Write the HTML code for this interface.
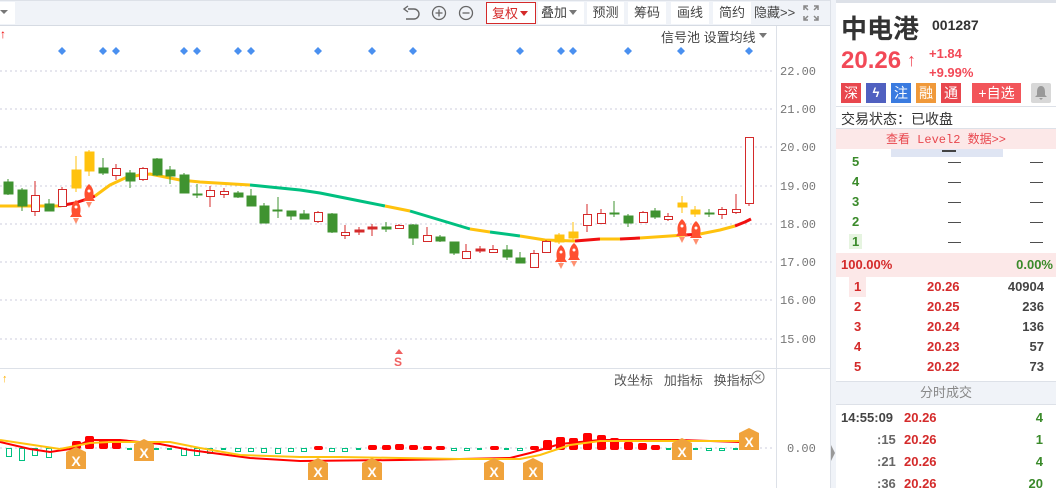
<!DOCTYPE html>
<html><head><meta charset="utf-8"><style>
*{margin:0;padding:0;box-sizing:border-box}
body{width:1056px;height:488px;overflow:hidden;background:#fff;font-family:"Liberation Sans","Noto Sans CJK SC",sans-serif;position:relative}
.a{position:absolute;white-space:nowrap}
.tb{position:absolute;top:0;left:0;width:830px;height:26px;background:#f0f3f8;border-top:1px solid #dde1e8;border-bottom:1px solid #d6dbe3}
.btn{position:absolute;top:2px;height:22px;background:#fff;font-size:13px;color:#444;line-height:22px;text-align:center;white-space:nowrap}
.m{font-family:"Liberation Mono",monospace}
.r{color:#d42a2a}.g{color:#3a8a2a}
</style></head><body>
<div class="tb"></div>
<div class="a" style="left:0;top:2px;width:15px;height:22px;background:#fff"></div>
<div class="a" style="left:0;top:10px;width:0;height:0;border-left:4px solid transparent;border-right:4px solid transparent;border-top:4px solid #777"></div>
<svg class="a" style="left:400px;top:4px" width="75" height="18" viewBox="0 0 75 18">
<path d="M8 5 h6 a5 5 0 0 1 0 10 h-8" fill="none" stroke="#666" stroke-width="1.4"/><path d="M8 2 L4 5 L8 8" fill="none" stroke="#666" stroke-width="1.4"/>
<circle cx="39" cy="9" r="6.5" fill="none" stroke="#666" stroke-width="1.3"/><path d="M35.5 9h7M39 5.5v7" stroke="#666" stroke-width="1.3"/>
<circle cx="66" cy="9" r="6.5" fill="none" stroke="#666" stroke-width="1.3"/><path d="M62.5 9h7" stroke="#666" stroke-width="1.3"/>
</svg>
<div class="btn" style="left:486px;width:50px;border:1px solid #d42a2a;color:#d42a2a;text-align:left;padding-left:5px">复权<span style="position:absolute;left:33px;top:8px;border-left:4px solid transparent;border-right:4px solid transparent;border-top:5px solid #d42a2a"></span></div>
<div class="btn" style="left:538px;width:46px;text-align:left;padding-left:3px">叠加<span style="position:absolute;left:31px;top:8px;border-left:4px solid transparent;border-right:4px solid transparent;border-top:5px solid #777"></span></div>
<div class="btn" style="left:587px;width:37px">预测</div>
<div class="btn" style="left:628px;width:38px">筹码</div>
<div class="btn" style="left:671px;width:38px">画线</div>
<div class="btn" style="left:713px;width:38px">简约</div>
<div class="btn" style="left:754px;width:42px;background:none;text-align:left">隐藏&gt;&gt;</div>
<svg class="a" style="left:803px;top:5px" width="16" height="16" viewBox="0 0 16 16" fill="none" stroke="#888" stroke-width="1.5"><path d="M1 5V1h4M11 1h4v4M15 11v4h-4M5 15H1v-4M1 1l4 4M15 1l-4 4M15 15l-4-4M1 15l4-4"/></svg>

<div class="a" style="left:661px;top:27px;font-size:13px;color:#444">信号池&nbsp;设置均线</div>
<div class="a" style="left:759px;top:33px;border-left:4px solid transparent;border-right:4px solid transparent;border-top:5px solid #777"></div>
<div class="a" style="left:0;top:27px;font-size:12px;color:#e00">↑</div>

<svg class="a" style="left:0;top:0" width="836" height="488">
<g stroke="#ccd" stroke-dasharray="2,3" stroke-width="1">
<path d="M0 71H775M0 109H775M0 147H775M0 186H775M0 224H775M0 262H775M0 300H775M0 339H775M0 448H775"/>
</g>
<line x1="776.5" y1="26" x2="776.5" y2="488" stroke="#dde1e8"/>
<line x1="0" y1="368.5" x2="830" y2="368.5" stroke="#dde1e8"/>
<line x1="830.5" y1="0" x2="830.5" y2="488" stroke="#dde1e8"/>
<rect x="831" y="0" width="5" height="488" fill="#f0f3f8"/>
<path d="M831 445 l4 8 l-4 8z" fill="#999"/>
<g font-family="Liberation Mono,monospace" font-size="12" fill="#777">
<text x="780" y="75">22.00</text><text x="780" y="113">21.00</text><text x="780" y="151">20.00</text><text x="780" y="190">19.00</text><text x="780" y="228">18.00</text><text x="780" y="266">17.00</text><text x="780" y="304">16.00</text><text x="780" y="343">15.00</text><text x="787" y="452">0.00</text>
</g>
<g fill="#4a90f0">
<path d="M62 47l4 4-4 4-4-4zM103 47l4 4-4 4-4-4zM116 47l4 4-4 4-4-4zM184 47l4 4-4 4-4-4zM197 47l4 4-4 4-4-4zM238 47l4 4-4 4-4-4zM251 47l4 4-4 4-4-4zM318 47l4 4-4 4-4-4zM372 47l4 4-4 4-4-4zM413 47l4 4-4 4-4-4zM520 47l4 4-4 4-4-4zM561 47l4 4-4 4-4-4zM573 47l4 4-4 4-4-4zM628 47l4 4-4 4-4-4zM681 47l4 4-4 4-4-4zM749 47l4 4-4 4-4-4z"/>
</g>
<g fill="none" stroke-width="3" stroke-linejoin="round">
<polyline stroke="#ffc20e" points="0,206 60,206 64,205"/>
<polyline stroke="#f01010" points="64,205 75,203 90,198 95,196"/>
<polyline stroke="#ffc20e" points="95,196 110,185 125,178 140,175 150,174 160,176 180,180 200,182 250,185"/>
<polyline stroke="#00c080" points="250,185 270,187 300,190 320,193 340,197 360,201 385,206"/>
<polyline stroke="#ffc20e" points="385,206 410,211"/>
<polyline stroke="#00c080" points="410,211 440,220 470,229"/>
<polyline stroke="#ffc20e" points="470,229 490,232"/>
<polyline stroke="#00c080" points="490,232 520,236"/>
<polyline stroke="#ffc20e" points="520,236 545,240 575,241"/>
<polyline stroke="#f01010" points="575,241 600,239"/>
<polyline stroke="#ffc20e" points="600,239 620,239"/>
<polyline stroke="#f01010" points="620,239 640,238"/>
<polyline stroke="#ffc20e" points="640,238 670,236 685,235"/>
<polyline stroke="#f01010" points="685,235 700,234"/>
<polyline stroke="#ffc20e" points="700,234 720,230 735,226"/>
<polyline stroke="#f01010" points="735,226 745,222 751,219"/>
</g>
<g stroke-width="1">
<g stroke="#3f9330" fill="#3f9330">
<line x1="8" y1="179" x2="8" y2="195"/><rect x="4" y="182" width="9" height="12"/>
<line x1="22" y1="188" x2="22" y2="211"/><rect x="18" y="190" width="9" height="16"/>
<line x1="49" y1="199" x2="49" y2="211"/><rect x="45" y="204" width="9" height="7"/>
<line x1="103" y1="158" x2="103" y2="175"/><rect x="99" y="168" width="9" height="5"/>
<line x1="130" y1="170" x2="130" y2="188"/><rect x="126" y="173" width="9" height="8"/>
<line x1="157" y1="158" x2="157" y2="176"/><rect x="153" y="159" width="9" height="16"/>
<line x1="170" y1="166" x2="170" y2="184"/><rect x="166" y="170" width="9" height="6"/>
<line x1="184" y1="173" x2="184" y2="193"/><rect x="180" y="175" width="9" height="18"/>
<line x1="197" y1="184" x2="197" y2="198"/><rect x="193" y="194" width="9" height="1"/>
<line x1="238" y1="191" x2="238" y2="198"/><rect x="234" y="193" width="9" height="4"/>
<line x1="251" y1="189" x2="251" y2="206"/><rect x="247" y="196" width="9" height="10"/>
<line x1="264" y1="203" x2="264" y2="223"/><rect x="260" y="206" width="9" height="17"/>
<line x1="278" y1="197" x2="278" y2="218"/><rect x="273" y="210" width="9" height="1"/>
<line x1="291" y1="211" x2="291" y2="220"/><rect x="287" y="211" width="9" height="5"/>
<line x1="304" y1="210" x2="304" y2="219"/><rect x="300" y="214" width="9" height="5"/>
<line x1="332" y1="213" x2="332" y2="233"/><rect x="328" y="214" width="9" height="18"/>
<line x1="386" y1="222" x2="386" y2="232"/><rect x="382" y="227" width="9" height="2"/>
<line x1="413" y1="224" x2="413" y2="245"/><rect x="409" y="225" width="9" height="13"/>
<line x1="440" y1="235" x2="440" y2="242"/><rect x="436" y="237" width="9" height="4"/>
<line x1="454" y1="242" x2="454" y2="255"/><rect x="450" y="242" width="9" height="11"/>
<line x1="507" y1="245" x2="507" y2="260"/><rect x="503" y="250" width="9" height="7"/>
<line x1="520" y1="252" x2="520" y2="263"/><rect x="516" y="258" width="9" height="5"/>
<line x1="614" y1="201" x2="614" y2="217"/><rect x="610" y="213" width="9" height="1"/>
<line x1="628" y1="214" x2="628" y2="227"/><rect x="624" y="216" width="9" height="7"/>
<line x1="655" y1="208" x2="655" y2="219"/><rect x="651" y="211" width="9" height="6"/>
<line x1="709" y1="209" x2="709" y2="217"/><rect x="705" y="213" width="9" height="1"/>
</g>
<g stroke="#d42a2a" fill="#fff">
<line x1="35" y1="181" x2="35" y2="216"/><rect x="31.5" y="195.5" width="8" height="16"/>
<line x1="62" y1="187" x2="62" y2="207"/><rect x="58.5" y="189.5" width="8" height="17"/>
<line x1="116" y1="164" x2="116" y2="180"/><rect x="112.5" y="168.5" width="8" height="7"/>
<line x1="143" y1="167" x2="143" y2="181"/><rect x="139.5" y="168.5" width="8" height="11"/>
<line x1="210" y1="186" x2="210" y2="207"/><rect x="206.5" y="190.5" width="8" height="6"/>
<line x1="224" y1="188" x2="224" y2="198"/><rect x="220.5" y="191.5" width="8" height="3"/>
<line x1="318" y1="211" x2="318" y2="223"/><rect x="314.5" y="212.5" width="8" height="9"/>
<line x1="345" y1="225" x2="345" y2="239"/><rect x="341.5" y="232.5" width="8" height="3"/>
<line x1="399" y1="224" x2="399" y2="229"/><rect x="395.5" y="225.5" width="8" height="3"/>
<line x1="427" y1="227" x2="427" y2="241"/><rect x="423.5" y="235.5" width="8" height="6"/>
<line x1="466" y1="244" x2="466" y2="259"/><rect x="462.5" y="251.5" width="8" height="7"/>
<line x1="493" y1="245" x2="493" y2="253"/><rect x="489.5" y="249.5" width="8" height="3"/>
<line x1="534" y1="250" x2="534" y2="268"/><rect x="530.5" y="253.5" width="8" height="14"/>
<line x1="546" y1="240" x2="546" y2="253"/><rect x="542.5" y="241.5" width="8" height="11"/>
<line x1="587" y1="204" x2="587" y2="232"/><rect x="583.5" y="214.5" width="8" height="11"/>
<line x1="601" y1="209" x2="601" y2="224"/><rect x="597.5" y="213.5" width="8" height="10"/>
<line x1="643" y1="211" x2="643" y2="223"/><rect x="639.5" y="212.5" width="8" height="10"/>
<line x1="668" y1="213" x2="668" y2="221"/><rect x="664.5" y="216.5" width="8" height="3"/>
<line x1="722" y1="207" x2="722" y2="219"/><rect x="718.5" y="209.5" width="8" height="5"/>
<line x1="736" y1="194" x2="736" y2="214"/><rect x="732.5" y="209.5" width="8" height="3"/>
<line x1="749" y1="137" x2="749" y2="206"/><rect x="745.5" y="137.5" width="8" height="66"/>
</g>
<g stroke="#d42a2a" fill="#d42a2a">
<line x1="359" y1="227" x2="359" y2="235"/><rect x="355" y="230" width="9" height="2"/>
<line x1="372" y1="224" x2="372" y2="236"/><rect x="368" y="227" width="9" height="2"/>
<line x1="480" y1="246" x2="480" y2="253"/><rect x="476" y="249" width="9" height="2"/>
</g>
<g stroke="#ffc20e" fill="#ffc20e">
<line x1="76" y1="156" x2="76" y2="192"/><rect x="72" y="170" width="9" height="18"/>
<line x1="89" y1="150" x2="89" y2="176"/><rect x="85" y="152" width="9" height="19"/>
<line x1="559" y1="233" x2="559" y2="244"/><rect x="555" y="235" width="9" height="7"/>
<line x1="573" y1="222" x2="573" y2="240"/><rect x="569" y="232" width="9" height="6"/>
<line x1="682" y1="196" x2="682" y2="213"/><rect x="678" y="203" width="9" height="4"/>
<line x1="695" y1="206" x2="695" y2="217"/><rect x="691" y="210" width="9" height="4"/>
</g>
</g>
<g fill="#ff5030">
<path d="M76 200 c5 4 5 10 4 14 l2 3 h-12 l2 -3 c-1 -4 -1 -10 4 -14z"/><path d="M73 218h6l-3 6z" fill="#ff9070"/>
<path d="M89 184 c5 4 5 10 4 14 l2 3 h-12 l2 -3 c-1 -4 -1 -10 4 -14z"/><path d="M86 202h6l-3 6z" fill="#ff9070"/>
<path d="M561 245 c5 4 5 10 4 14 l2 3 h-12 l2 -3 c-1 -4 -1 -10 4 -14z"/><path d="M558 263h6l-3 6z" fill="#ff9070"/>
<path d="M574 243 c5 4 5 10 4 14 l2 3 h-12 l2 -3 c-1 -4 -1 -10 4 -14z"/><path d="M571 261h6l-3 6z" fill="#ff9070"/>
<path d="M682 219 c5 4 5 10 4 14 l2 3 h-12 l2 -3 c-1 -4 -1 -10 4 -14z"/><path d="M679 237h6l-3 6z" fill="#ff9070"/>
<path d="M696 221 c5 4 5 10 4 14 l2 3 h-12 l2 -3 c-1 -4 -1 -10 4 -14z"/><path d="M693 239h6l-3 6z" fill="#ff9070"/>
</g>
<g fill="#fff"><circle cx="76" cy="207" r="1.5"/><circle cx="89" cy="191" r="1.5"/><circle cx="561" cy="252" r="1.5"/><circle cx="574" cy="250" r="1.5"/><circle cx="682" cy="226" r="1.5"/><circle cx="696" cy="228" r="1.5"/></g>
<path d="M399 349l4 5h-8z" fill="#f06060"/>
<text x="394" y="366" font-size="12" font-weight="bold" fill="#f06060" font-family="Liberation Sans">S</text>
<text x="2" y="382" font-size="11" fill="#ffb000">↑</text>
<g fill="none" stroke="#00c080">
<rect x="6.5" y="448.5" width="5" height="8"/><rect x="19.5" y="448.5" width="5" height="12"/><rect x="32.5" y="448.5" width="5" height="7"/><rect x="46.5" y="448.5" width="5" height="9"/>
<rect x="181.5" y="448.5" width="5" height="7"/><rect x="194.5" y="448.5" width="5" height="7"/><rect x="207.5" y="448.5" width="5" height="5"/><rect x="235.5" y="448.5" width="5" height="3"/><rect x="248.5" y="448.5" width="5" height="3"/><rect x="261.5" y="448.5" width="5" height="4"/><rect x="275.5" y="448.5" width="5" height="5"/><rect x="288.5" y="448.5" width="5" height="3"/><rect x="301.5" y="448.5" width="5" height="3"/><rect x="329.5" y="448.5" width="5" height="3"/><rect x="342.5" y="448.5" width="5" height="3"/>
<rect x="451.5" y="448.5" width="5" height="2"/><rect x="464.5" y="448.5" width="5" height="2"/><rect x="517.5" y="448.5" width="5" height="2"/><rect x="706.5" y="448.5" width="5" height="2"/><rect x="719.5" y="448.5" width="5" height="2"/>
</g>
<g fill="#00c080"><rect x="127" y="448" width="5" height="2"/><rect x="154" y="448" width="5" height="2"/><rect x="167" y="448" width="5" height="2"/><rect x="221" y="448" width="5" height="2"/><rect x="356" y="448" width="5" height="2"/><rect x="477" y="448" width="5" height="2"/><rect x="504" y="448" width="5" height="2"/><rect x="666" y="448" width="5" height="2"/><rect x="693" y="448" width="5" height="2"/><rect x="733" y="448" width="5" height="2"/></g>
<g fill="#f00">
<rect x="72" y="441" width="9" height="8" rx="2"/><rect x="85" y="436" width="9" height="13" rx="2"/><rect x="99" y="439" width="9" height="10" rx="2"/><rect x="112" y="441" width="9" height="8" rx="2"/>
<rect x="314" y="446" width="9" height="4" rx="2"/><rect x="368" y="445" width="9" height="5" rx="2"/><rect x="382" y="445" width="9" height="5" rx="2"/><rect x="395" y="444" width="9" height="6" rx="2"/><rect x="409" y="445" width="9" height="5" rx="2"/><rect x="423" y="446" width="9" height="4" rx="2"/><rect x="436" y="446" width="9" height="4" rx="2"/><rect x="490" y="446" width="9" height="4" rx="2"/><rect x="530" y="446" width="9" height="4" rx="2"/>
<rect x="543" y="440" width="9" height="10" rx="2"/><rect x="556" y="437" width="9" height="13" rx="2"/><rect x="569" y="438" width="9" height="12" rx="2"/><rect x="583" y="433" width="9" height="17" rx="2"/><rect x="597" y="435" width="9" height="15" rx="2"/><rect x="610" y="438" width="9" height="12" rx="2"/><rect x="624" y="442" width="9" height="8" rx="2"/><rect x="638" y="443" width="9" height="7" rx="2"/><rect x="651" y="445" width="9" height="5" rx="2"/><rect x="745" y="430" width="9" height="18" rx="2"/>
</g>
<g fill="none" stroke-width="2">
<polyline stroke="#f00" points="0,442 30,449 50,452 70,449 90,440 120,440 160,444 190,450 250,458 300,461 400,460 460,459 510,458 530,453 560,444 600,440 680,440 740,442 751,437"/>
<polyline stroke="#ffc20e" points="0,440 40,446 60,449 90,443 110,442 170,442 200,448 240,455 300,457 340,457 400,458 460,459 520,459 540,455 570,445 600,441 700,441 740,441 751,440"/>
</g>
<g fill="#f0a33c">
<path d="M66 452l10-5 10 5v17h-20z"/><path d="M134 444l10-5 10 5v17h-20z"/><path d="M308 463l10-5 10 5v17h-20z"/><path d="M362 463l10-5 10 5v17h-20z"/><path d="M484 463l10-5 10 5v17h-20z"/><path d="M523 463l10-5 10 5v17h-20z"/><path d="M672 443l10-5 10 5v17h-20z"/><path d="M739 433l10-5 10 5v17h-20z"/>
</g>
<g fill="#fff" font-family="Liberation Sans" font-weight="bold" font-size="14" text-anchor="middle">
<text x="76" y="466">X</text><text x="144" y="458">X</text><text x="318" y="477">X</text><text x="372" y="477">X</text><text x="494" y="477">X</text><text x="533" y="477">X</text><text x="682" y="457">X</text><text x="749" y="447">X</text>
</g>
</svg>
<div class="a" style="left:614px;top:370px;font-size:13px;color:#555">改坐标&nbsp;&nbsp; 加指标&nbsp;&nbsp; 换指标</div>
<svg class="a" style="left:751px;top:370px" width="14" height="14"><circle cx="7" cy="7" r="6" fill="none" stroke="#777"/><path d="M4.5 4.5l5 5M9.5 4.5l-5 5" stroke="#777"/></svg>

<div class="a" style="left:836px;top:0;width:220px;height:3px;background:#dde1e8"></div>
<div class="a" style="left:841px;top:9px;font-size:26px;font-weight:bold;color:#333">中电港</div>
<div class="a" style="left:932px;top:17px;font-size:14px;font-weight:bold;color:#333">001287</div>
<div class="a" style="left:841px;top:47px;font-size:24px;font-weight:bold;color:#f24957">20.26</div>
<div class="a" style="left:907px;top:50px;font-size:18px;font-weight:bold;color:#f24957">↑</div>
<div class="a" style="left:929px;top:44px;font-size:13px;font-weight:bold;color:#f24957;line-height:19px">+1.84<br>+9.99%</div>
<div class="a" style="left:841px;top:83px;width:20px;height:20px;background:#e8474e;color:#fff;font-size:14px;text-align:center;line-height:20px">深</div>
<div class="a" style="left:866px;top:83px;width:20px;height:20px;background:#5060c0;color:#fff;font-size:13px;text-align:center;line-height:20px;font-weight:bold">ϟ</div>
<div class="a" style="left:891px;top:83px;width:20px;height:20px;background:#3a7be0;color:#fff;font-size:14px;text-align:center;line-height:20px">注</div>
<div class="a" style="left:916px;top:83px;width:20px;height:20px;background:#f0993a;color:#fff;font-size:14px;text-align:center;line-height:20px">融</div>
<div class="a" style="left:941px;top:83px;width:20px;height:20px;background:#e8474e;color:#fff;font-size:14px;text-align:center;line-height:20px">通</div>
<div class="a" style="left:972px;top:83px;width:49px;height:20px;background:#f2555a;color:#fff;font-size:14px;text-align:center;line-height:20px">+自选</div>
<div class="a" style="left:1031px;top:83px;width:20px;height:20px;background:#d8d8d8;border-radius:2px"></div>
<svg class="a" style="left:1034px;top:85px" width="14" height="16"><path d="M7 1c-3 0-4 3-4 6v3l-2 2h12l-2-2V7c0-3-1-6-4-6zM5 13h4l-2 2z" fill="#999"/></svg>
<div class="a" style="left:836px;top:106px;width:220px;height:1px;background:#dde1e8"></div>
<div class="a" style="left:841px;top:109px;font-size:14px;color:#333">交易状态：已收盘</div>
<div class="a" style="left:836px;top:128px;width:220px;height:1px;background:#dde1e8"></div>
<div class="a m" style="left:836px;top:129px;width:220px;height:20px;background:#fce8e8;color:#e8474e;font-size:12px;text-align:center;line-height:20px"><span style="font-family:'Liberation Sans','Noto Sans CJK SC',sans-serif">查看</span> Level2 <span style="font-family:'Liberation Sans','Noto Sans CJK SC',sans-serif">数据</span>&gt;&gt;</div>
<div class="a" style="left:891px;top:149px;width:112px;height:8px;background:#dfe5f3"></div>
<div class="a" style="left:942px;top:150px;width:14px;height:2px;background:#444"></div>
<div class="a" style="left:836px;top:152px;width:220px;font-size:13px;font-weight:bold;line-height:20px">
<div class="g" style="position:relative;height:20px;padding-left:16px">5<span style="position:absolute;left:112px;color:#333;font-weight:normal">—</span><span style="position:absolute;left:194px;color:#333;font-weight:normal">—</span></div>
<div class="g" style="position:relative;height:20px;padding-left:16px">4<span style="position:absolute;left:112px;color:#333;font-weight:normal">—</span><span style="position:absolute;left:194px;color:#333;font-weight:normal">—</span></div>
<div class="g" style="position:relative;height:20px;padding-left:16px">3<span style="position:absolute;left:112px;color:#333;font-weight:normal">—</span><span style="position:absolute;left:194px;color:#333;font-weight:normal">—</span></div>
<div class="g" style="position:relative;height:20px;padding-left:16px">2<span style="position:absolute;left:112px;color:#333;font-weight:normal">—</span><span style="position:absolute;left:194px;color:#333;font-weight:normal">—</span></div>
<div class="g" style="position:relative;height:20px;padding-left:16px"><span style="background:#e6f4e0;padding:0 3px;margin-left:-3px">1</span><span style="position:absolute;left:112px;color:#333;font-weight:normal">—</span><span style="position:absolute;left:194px;color:#333;font-weight:normal">—</span></div>
</div>
<div class="a" style="left:836px;top:253px;width:220px;height:24px;background:#fce8e8;font-size:13px;font-weight:bold;line-height:24px"><span class="r" style="position:absolute;left:5px">100.00%</span><span class="g" style="position:absolute;right:3px">0.00%</span></div>
<div class="a" style="left:836px;top:277px;width:220px;font-size:13px;font-weight:bold;line-height:20px">
<div style="position:relative;height:20px"><span class="r" style="position:absolute;left:13px;background:#fce8e8;padding:0 5px">1</span><span class="r" style="position:absolute;left:91px">20.26</span><span style="position:absolute;right:12px;color:#444">40904</span></div>
<div style="position:relative;height:20px"><span class="r" style="position:absolute;left:18px">2</span><span class="r" style="position:absolute;left:91px">20.25</span><span style="position:absolute;right:12px;color:#444">236</span></div>
<div style="position:relative;height:20px"><span class="r" style="position:absolute;left:18px">3</span><span class="r" style="position:absolute;left:91px">20.24</span><span style="position:absolute;right:12px;color:#444">136</span></div>
<div style="position:relative;height:20px"><span class="r" style="position:absolute;left:18px">4</span><span class="r" style="position:absolute;left:91px">20.23</span><span style="position:absolute;right:12px;color:#444">57</span></div>
<div style="position:relative;height:20px"><span class="r" style="position:absolute;left:18px">5</span><span class="r" style="position:absolute;left:91px">20.22</span><span style="position:absolute;right:12px;color:#444">73</span></div>
</div>
<div class="a" style="left:836px;top:381px;width:220px;height:24px;background:#f0f3f8;border-top:1px solid #dde1e8;border-bottom:1px solid #dde1e8;font-size:13px;color:#888;text-align:center;line-height:22px">分时成交</div>
<div class="a" style="left:836px;top:407px;width:220px;font-size:13px;font-weight:bold;line-height:22px">
<div style="position:relative;height:22px"><span style="position:absolute;left:5px;color:#444">14:55:09</span><span class="r" style="position:absolute;left:68px">20.26</span><span class="g" style="position:absolute;right:13px">4</span></div>
<div style="position:relative;height:22px"><span style="position:absolute;left:41px;color:#666">:15</span><span class="r" style="position:absolute;left:68px">20.26</span><span class="g" style="position:absolute;right:13px">1</span></div>
<div style="position:relative;height:22px"><span style="position:absolute;left:41px;color:#666">:21</span><span class="r" style="position:absolute;left:68px">20.26</span><span class="g" style="position:absolute;right:13px">4</span></div>
<div style="position:relative;height:22px"><span style="position:absolute;left:41px;color:#666">:36</span><span class="r" style="position:absolute;left:68px">20.26</span><span class="g" style="position:absolute;right:13px">20</span></div>
</div>
</body></html>
